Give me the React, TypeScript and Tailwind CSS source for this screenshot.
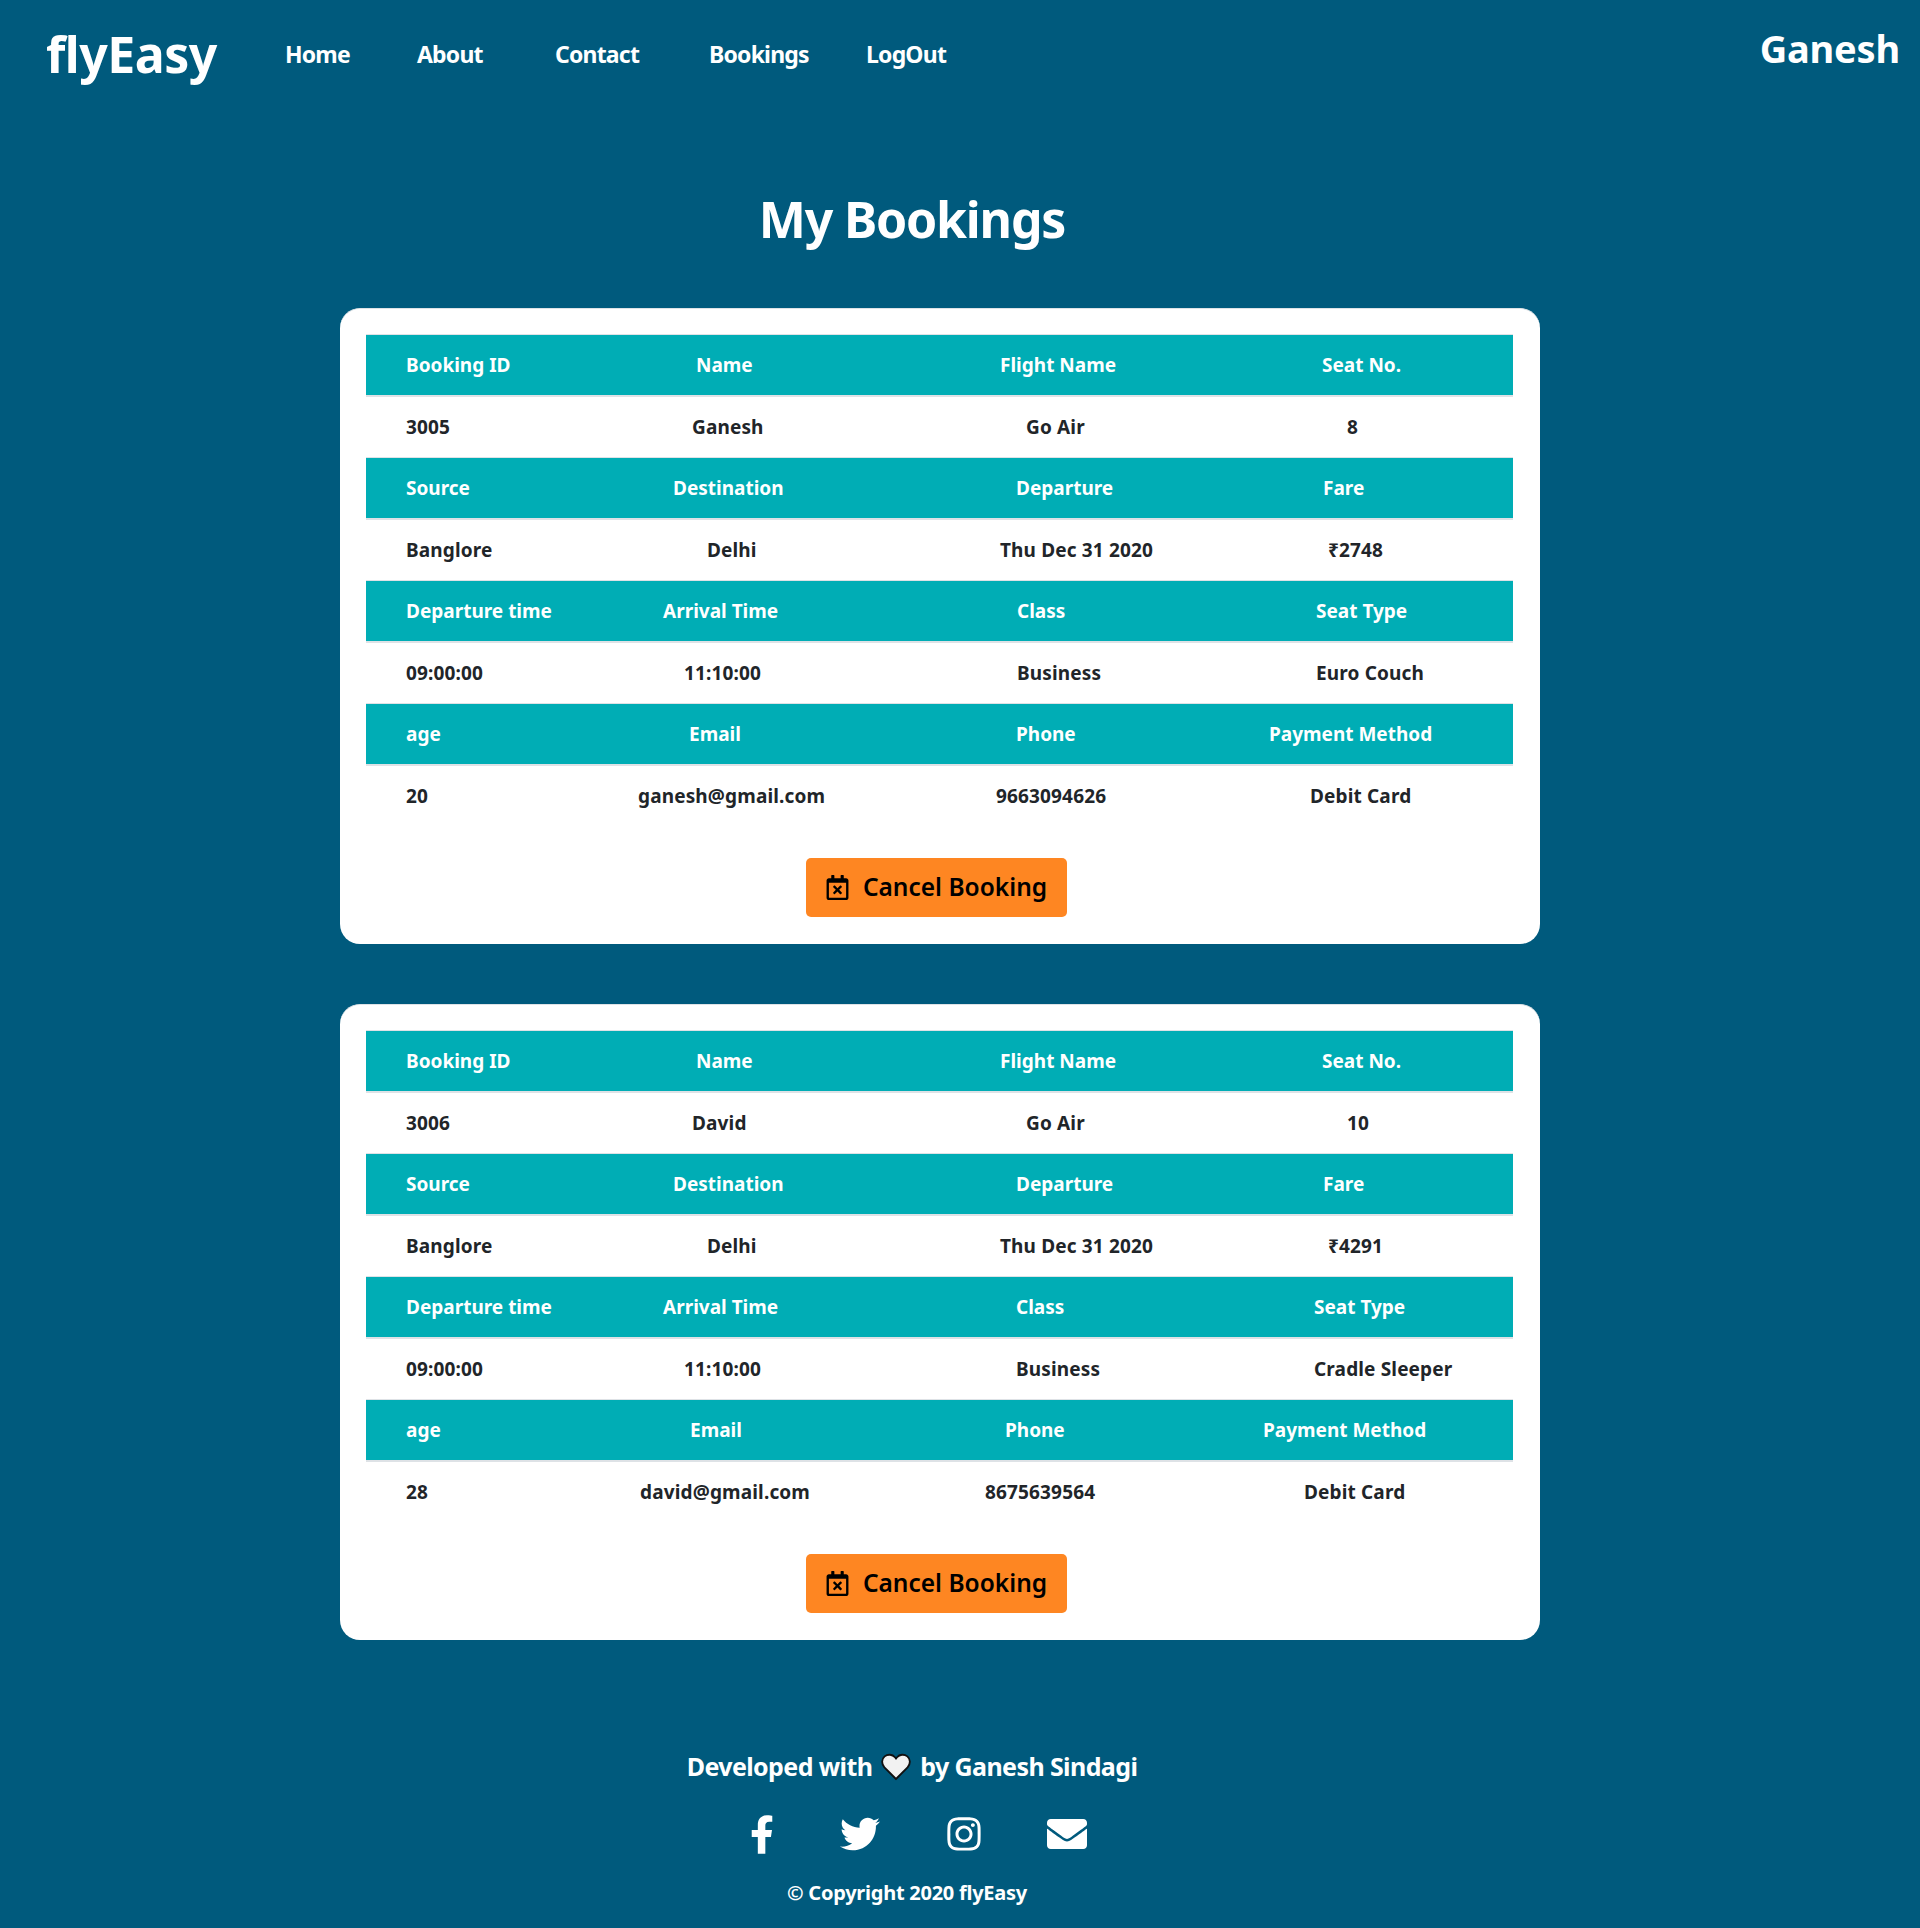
import React from "react";
import { FaRegCalendarTimes, FaFacebookF, FaTwitter, FaInstagram, FaEnvelope } from "react-icons/fa";

type Row = { cols: string; cells: string[] };

const bookings: { head: Row[]; data: Row[] }[] = [
  {
    head: [
      { cols: "grid-cols-[290px_304px_322px_1fr]", cells: ["Booking ID", "Name", "Flight Name", "Seat No."] },
      { cols: "grid-cols-[267px_343px_307px_1fr]", cells: ["Source", "Destination", "Departure", "Fare"] },
      { cols: "grid-cols-[257px_354px_299px_1fr]", cells: ["Departure time", "Arrival Time", "Class", "Seat Type"] },
      { cols: "grid-cols-[283px_327px_253px_1fr]", cells: ["age", "Email", "Phone", "Payment Method"] },
    ],
    data: [
      { cols: "grid-cols-[286px_334px_321px_1fr]", cells: ["3005", "Ganesh", "Go Air", "8"] },
      { cols: "grid-cols-[301px_293px_328px_1fr]", cells: ["Banglore", "Delhi", "Thu Dec 31 2020", "₹2748"] },
      { cols: "grid-cols-[278px_333px_299px_1fr]", cells: ["09:00:00", "11:10:00", "Business", "Euro Couch"] },
      { cols: "grid-cols-[232px_358px_314px_1fr]", cells: ["20", "ganesh@gmail.com", "9663094626", "Debit Card"] },
    ],
  },
  {
    head: [
      { cols: "grid-cols-[290px_304px_322px_1fr]", cells: ["Booking ID", "Name", "Flight Name", "Seat No."] },
      { cols: "grid-cols-[267px_343px_307px_1fr]", cells: ["Source", "Destination", "Departure", "Fare"] },
      { cols: "grid-cols-[257px_353px_298px_1fr]", cells: ["Departure time", "Arrival Time", "Class", "Seat Type"] },
      { cols: "grid-cols-[284px_315px_258px_1fr]", cells: ["age", "Email", "Phone", "Payment Method"] },
    ],
    data: [
      { cols: "grid-cols-[286px_334px_321px_1fr]", cells: ["3006", "David", "Go Air", "10"] },
      { cols: "grid-cols-[301px_293px_328px_1fr]", cells: ["Banglore", "Delhi", "Thu Dec 31 2020", "₹4291"] },
      { cols: "grid-cols-[278px_332px_298px_1fr]", cells: ["09:00:00", "11:10:00", "Business", "Cradle Sleeper"] },
      { cols: "grid-cols-[234px_345px_319px_1fr]", cells: ["28", "david@gmail.com", "8675639564", "Debit Card"] },
    ],
  },
];

function BookingCard({ booking }: { booking: (typeof bookings)[number] }) {
  return (
    <div className="w-[1200px] h-[636px] rounded-[20px] bg-white border-t border-[#dee2e6] pt-[25px] pl-[26px] pr-[27px]">
      {booking.head.map((row, i) => (
        <div key={i}>
          <div className={`grid ${row.cols} items-center h-[61px] pl-[40px] pt-[1px] bg-[#00adb5] text-white border-t border-[#dee2e6] text-[19px] font-bold`}>
            {row.cells.map((c) => (
              <span key={c}>{c}</span>
            ))}
          </div>
          <div className={`grid ${booking.data[i].cols} items-center h-[62px] pl-[40px] pt-[1px] text-[#212529] border-t-2 border-[#dee2e6] text-[19px] font-bold tracking-[0.15px]`}>
            {booking.data[i].cells.map((c) => (
              <span key={c}>{c}</span>
            ))}
          </div>
        </div>
      ))}
      <div className="flex justify-center pt-[32px] pr-[7px]">
        <button className="flex items-center justify-center gap-[13px] w-[261px] h-[59px] rounded-[5px] bg-[#fe8622] text-black text-[24.5px] font-semibold">
          <FaRegCalendarTimes size={25} />
          Cancel Booking
        </button>
      </div>
    </div>
  );
}

export default function App() {
  return (
    <div className="min-h-[1928px] bg-[#005a7d] text-white font-['Noto_Sans',sans-serif]">
      <nav className="flex items-start h-[110px] pl-[46px] pr-[20px]">
        <a className="mt-[18px] w-[239px] text-[50px] leading-[72px] font-bold tracking-[-0.5px]">flyEasy</a>
        <ul className="flex mt-[37px] text-[23px] leading-[34px] font-bold tracking-[-0.8px]">
          <li className="w-[132px]">Home</li>
          <li className="w-[138px]">About</li>
          <li className="w-[154px]">Contact</li>
          <li className="w-[157px]">Bookings</li>
          <li>LogOut</li>
        </ul>
        <div className="ml-auto mt-[21px] text-[38px] leading-[54px] font-bold tracking-[-0.2px]">Ganesh</div>
      </nav>

      <h1 className="mt-[79px] pr-[96px] text-center text-[50px] leading-[60px] font-bold tracking-[-1.2px]">My Bookings</h1>

      <main className="flex flex-col items-center gap-[60px] mt-[59px] pr-[40px]">
        {bookings.map((b, i) => (
          <BookingCard key={i} booking={b} />
        ))}
      </main>

      <footer className="mt-[108px] pr-[96px] flex flex-col items-center">
        <div className="flex items-center text-[25px] leading-[36px] font-bold tracking-[-0.6px]">
          Developed with
          <svg viewBox="0 0 24 22" className="w-[32px] h-[29px] mx-[8px]">
            <path
              d="M12 20.5 3.2 11.6C.8 9.1 1 5.3 3.4 3.3 5.8 1.4 9.3 1.7 11.2 4L12 5l.8-1c1.900-2.300 5.400-2.600 7.800-.7 2.400 2 2.600 5.800.2 8.300Z"
              fill="#f2f2f2"
              stroke="#111"
              strokeWidth="1.4"
            />
          </svg>
          by Ganesh Sindagi
        </div>
        <div className="flex items-center mt-[30px] h-[40px] pl-[12px]">
          <FaFacebookF className="w-[24px] h-[39px]" />
          <FaTwitter className="w-[40px] h-[40px] ml-[66px]" />
          <FaInstagram className="w-[38px] h-[38px] ml-[65px]" />
          <FaEnvelope className="w-[40px] h-[40px] ml-[64px]" />
        </div>
        <div className="mt-[24px] pr-[10px] text-[20px] leading-[30px] font-bold tracking-[-0.25px]">© Copyright 2020 flyEasy</div>
      </footer>
    </div>
  );
}
